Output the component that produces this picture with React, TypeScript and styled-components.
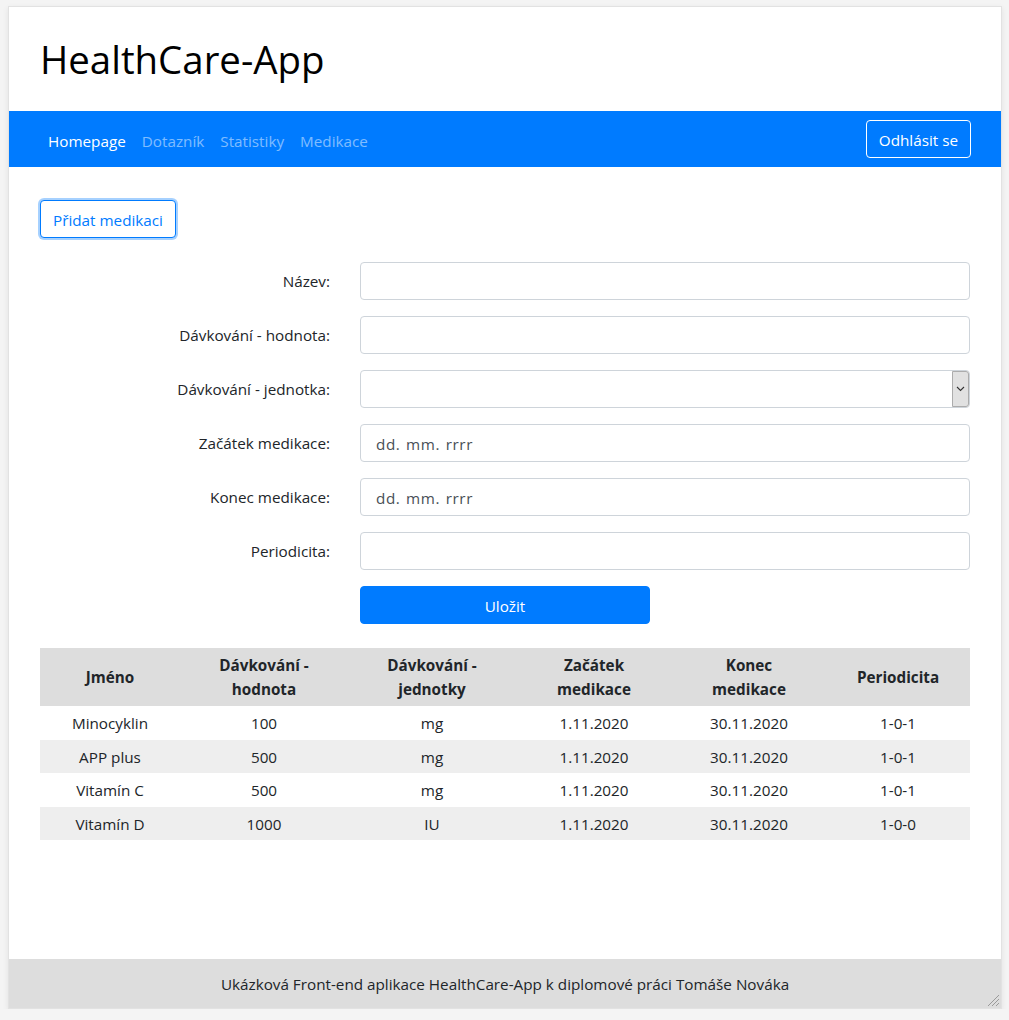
import React from "react";
import styled, { createGlobalStyle } from "styled-components";

const GlobalStyle = createGlobalStyle`
  html, body {
    margin: 0;
    padding: 0;
    background: #f4f4f4;
  }
  body {
    padding: 6px 8px 0 8px;
    font-family: "Segoe UI", "Open Sans", "Noto Sans", sans-serif;
    font-size: 15.25px;
    line-height: 24px;
    color: #212529;
  }
  * {
    box-sizing: border-box;
  }
`;

const Frame = styled.div`
  position: relative;
  width: 994px;
  height: 1003px;
  background: #ffffff;
  border: 1px solid #e2e2e2;
  box-shadow: 0 2px 6px rgba(0, 0, 0, 0.08);
  display: flex;
  flex-direction: column;
  overflow: hidden;
`;

const Header = styled.header`
  padding: 28px 31px;
`;

const Title = styled.h1`
  margin: 0;
  font-size: 38.4px;
  font-weight: 400;
  line-height: 48px;
  color: #000000;
`;

const NavBar = styled.nav`
  height: 56px;
  background: #007bff;
  display: flex;
  align-items: center;
  justify-content: space-between;
  padding: 0 30px 0 31px;
`;

const NavLinks = styled.div`
  display: flex;
  align-items: center;
  padding-top: 3px;
`;

const NavLink = styled.a<{ active?: boolean }>`
  padding: 8px;
  color: ${(p) => (p.active ? "#ffffff" : "rgba(255, 255, 255, 0.5)")};
  text-decoration: none;
  cursor: pointer;
`;

const LogoutButton = styled.button`
  height: 38px;
  padding: 2px 12px 0 12px;
  font: inherit;
  color: #ffffff;
  background: transparent;
  border: 1px solid #ffffff;
  border-radius: 4px;
  cursor: pointer;
`;

const Main = styled.main`
  flex: 1;
  padding: 33px 31px 0 31px;
`;

const AddButton = styled.button`
  height: 38px;
  padding: 1px 12px 0 12px;
  font: inherit;
  color: #007bff;
  background: #ffffff;
  border: 1px solid #007bff;
  border-radius: 4px;
  box-shadow: 0 0 0 2px rgba(0, 123, 255, 0.35);
  cursor: pointer;
`;

const Form = styled.form`
  margin-top: 24px;
  display: grid;
  grid-template-columns: 320px 1fr;
  row-gap: 16px;
  margin-left: -15px;
`;

const Label = styled.label`
  height: 38px;
  display: flex;
  align-items: center;
  justify-content: flex-end;
  padding: 0 15px 0 0;
`;

const Field = styled.div`
  padding-left: 15px;
  position: relative;
`;

const Input = styled.input`
  display: block;
  width: 100%;
  height: 38px;
  padding: 7px 15px 5px 15px;
  font: inherit;
  color: #495057;
  background: #ffffff;
  border: 1px solid #ced4da;
  border-radius: 4px;
  outline: none;
  &::placeholder {
    color: #495057;
    letter-spacing: 0.6px;
    word-spacing: 1px;
  }
`;

const Select = styled.select`
  display: block;
  width: 100%;
  height: 38px;
  padding: 6px 12px;
  font: inherit;
  color: #495057;
  background: #ffffff;
  border: 1px solid #ced4da;
  border-radius: 4px;
  appearance: none;
  outline: none;
`;

const SelectArrow = styled.span`
  position: absolute;
  top: 1px;
  right: 1px;
  width: 17px;
  height: 36px;
  background: #e1e1e1;
  border: 1px solid #acacac;
  border-radius: 0 3px 3px 0;
  display: flex;
  align-items: center;
  justify-content: center;
  pointer-events: none;
`;

const SaveButton = styled.button`
  grid-column: 2;
  width: 290px;
  height: 38px;
  margin-left: 15px;
  padding-top: 2px;
  font: inherit;
  color: #ffffff;
  background: #007bff;
  border: 1px solid #007bff;
  border-radius: 4px;
  cursor: pointer;
`;

const Table = styled.table`
  margin-top: 24px;
  width: 930px;
  border-collapse: collapse;
  table-layout: fixed;
`;

const HeadCell = styled.th<{ w: number }>`
  width: ${(p) => p.w}px;
  padding: 5px 5px 5px 5px;
  background: #dddddd;
  font-weight: 700;
  line-height: 24px;
  text-align: center;
  vertical-align: middle;
`;

const Row = styled.tr<{ striped?: boolean }>`
  background: ${(p) => (p.striped ? "#eeeeee" : "#ffffff")};
`;

const Cell = styled.td`
  padding: 5px 5px 4.5px 5px;
  line-height: 24px;
  text-align: center;
`;

const Footer = styled.footer`
  height: 49px;
  background: #dddddd;
  display: flex;
  align-items: center;
  justify-content: center;
  color: #212529;
`;

const Grip = styled.svg`
  position: absolute;
  right: 1px;
  bottom: 1px;
`;

const columns: { label: React.ReactNode; w: number }[] = [
  { label: "Jméno", w: 140 },
  { label: <>Dávkování -<br />hodnota</>, w: 168 },
  { label: <>Dávkování -<br />jednotky</>, w: 168 },
  { label: <>Začátek<br />medikace</>, w: 156 },
  { label: <>Konec<br />medikace</>, w: 154 },
  { label: "Periodicita", w: 144 },
];

const medications = [
  ["Minocyklin", "100", "mg", "1.11.2020", "30.11.2020", "1-0-1"],
  ["APP plus", "500", "mg", "1.11.2020", "30.11.2020", "1-0-1"],
  ["Vitamín C", "500", "mg", "1.11.2020", "30.11.2020", "1-0-1"],
  ["Vitamín D", "1000", "IU", "1.11.2020", "30.11.2020", "1-0-0"],
];

const Chevron = () => (
  <svg width="9" height="6" viewBox="0 0 9 6">
    <path d="M1 1 L4.5 4.5 L8 1" fill="none" stroke="#333" strokeWidth="1.1" />
  </svg>
);

export default function App() {
  return (
    <>
      <GlobalStyle />
      <Frame>
        <Header>
          <Title>HealthCare-App</Title>
        </Header>
        <NavBar>
          <NavLinks>
            <NavLink active>Homepage</NavLink>
            <NavLink>Dotazník</NavLink>
            <NavLink>Statistiky</NavLink>
            <NavLink>Medikace</NavLink>
          </NavLinks>
          <LogoutButton>Odhlásit se</LogoutButton>
        </NavBar>
        <Main>
          <AddButton>Přidat medikaci</AddButton>
          <Form onSubmit={(e) => e.preventDefault()}>
            <Label>Název:</Label>
            <Field>
              <Input type="text" />
            </Field>
            <Label>Dávkování - hodnota:</Label>
            <Field>
              <Input type="text" />
            </Field>
            <Label>Dávkování - jednotka:</Label>
            <Field>
              <Select defaultValue="">
                <option value=""></option>
                <option value="mg">mg</option>
                <option value="IU">IU</option>
              </Select>
              <SelectArrow>
                <Chevron />
              </SelectArrow>
            </Field>
            <Label>Začátek medikace:</Label>
            <Field>
              <Input type="text" placeholder="dd. mm. rrrr" />
            </Field>
            <Label>Konec medikace:</Label>
            <Field>
              <Input type="text" placeholder="dd. mm. rrrr" />
            </Field>
            <Label>Periodicita:</Label>
            <Field>
              <Input type="text" />
            </Field>
            <SaveButton type="submit">Uložit</SaveButton>
          </Form>
          <Table>
            <thead>
              <tr>
                {columns.map((c, i) => (
                  <HeadCell key={i} w={c.w}>
                    {c.label}
                  </HeadCell>
                ))}
              </tr>
            </thead>
            <tbody>
              {medications.map((m, i) => (
                <Row key={i} striped={i % 2 === 1}>
                  {m.map((v, j) => (
                    <Cell key={j}>{v}</Cell>
                  ))}
                </Row>
              ))}
            </tbody>
          </Table>
        </Main>
        <Footer>
          Ukázková Front-end aplikace HealthCare-App k diplomové práci Tomáše Nováka
        </Footer>
        <Grip width="14" height="14" viewBox="0 0 14 14">
          <path
            d="M13 2 L2 13 M13 6 L6 13 M13 10 L10 13"
            stroke="#9a9a9a"
            strokeWidth="1"
          />
        </Grip>
      </Frame>
    </>
  );
}
